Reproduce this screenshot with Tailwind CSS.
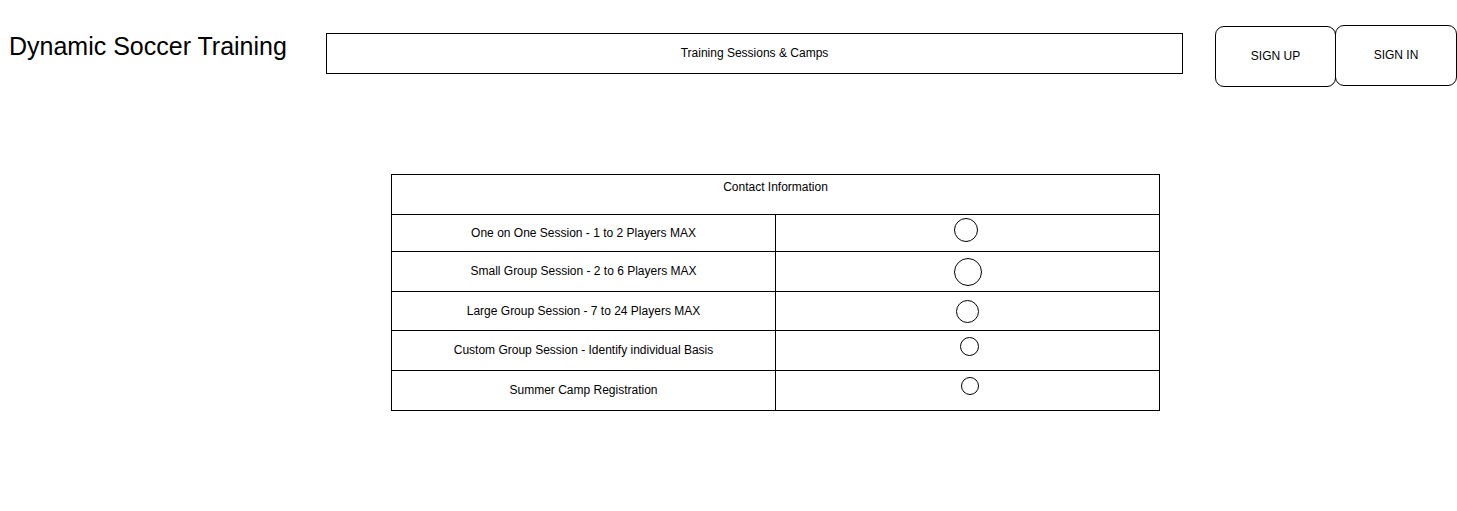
<!DOCTYPE html>
<html lang="en">
<head>
<meta charset="utf-8">
<meta name="viewport" content="width=device-width, initial-scale=1">
<title>Dynamic Soccer Training</title>
<script src="https://cdn.jsdelivr.net/npm/@tailwindcss/browser@4"></script>
</head>
<body class="bg-white font-['Liberation_Sans',Arial,sans-serif] text-xs text-black">
<header class="flex items-start pt-[25px] pl-[9px]">
  <h1 class="w-[317px] shrink-0 pt-[3px] text-[25px] leading-9 whitespace-nowrap">Dynamic Soccer Training</h1>
  <nav class="mt-2 min-w-0 flex-1">
    <a href="#sessions" class="flex h-[41px] items-center justify-center border border-black pb-0.5">Training Sessions &amp; Camps</a>
  </nav>
  <div class="ml-8 flex shrink-0 items-start">
    <button type="button" class="mt-px h-[61px] w-[121px] rounded-[9px] border border-black pb-0.5">SIGN UP</button>
    <button type="button" class="-ml-px h-[61px] w-[122px] rounded-[9px] border border-black pb-0.5">SIGN IN</button>
  </div>
</header>
<main id="sessions" class="pt-[87px] pr-[297px] pl-[391px]">
  <table class="w-full table-fixed border-separate border-spacing-0 border-r border-b border-black text-center">
    <thead>
      <tr><th colspan="2" class="h-10 border-t border-l border-black pt-1 align-top font-normal">Contact Information</th></tr>
    </thead>
    <tbody>
      <tr>
        <td class="h-[37px] border-t border-l border-black p-0"><label for="one">One on One Session - 1 to 2 Players MAX</label></td>
        <td class="border-t border-l border-black pt-[3px] pr-0.5 align-top"><div class="mx-auto flex w-[25px] justify-start"><input id="one" name="session" type="radio" class="size-6 shrink-0 appearance-none rounded-full border border-black checked:bg-black"></div></td>
      </tr>
      <tr>
        <td class="h-10 border-t border-l border-black p-0 pb-0.5"><label for="small">Small Group Session - 2 to 6 Players MAX</label></td>
        <td class="border-t border-l border-black pt-1.5 pr-0.5 align-top"><div class="mx-auto flex w-[25px] justify-start"><input id="small" name="session" type="radio" class="size-7 shrink-0 appearance-none rounded-full border border-black checked:bg-black"></div></td>
      </tr>
      <tr>
        <td class="h-[39px] border-t border-l border-black p-0"><label for="large">Large Group Session - 7 to 24 Players MAX</label></td>
        <td class="border-t border-l border-black pt-2 pr-0.5 align-top"><div class="mx-auto flex w-[25px] justify-end"><input id="large" name="session" type="radio" class="size-[23px] shrink-0 appearance-none rounded-full border border-black checked:bg-black"></div></td>
      </tr>
      <tr>
        <td class="h-10 border-t border-l border-black p-0 pb-0.5"><label for="custom">Custom Group Session - Identify individual Basis</label></td>
        <td class="border-t border-l border-black pt-1.5 pr-0.5 align-top"><div class="mx-auto flex w-[25px] justify-end"><input id="custom" name="session" type="radio" class="size-[19px] shrink-0 appearance-none rounded-full border border-black checked:bg-black"></div></td>
      </tr>
      <tr>
        <td class="h-10 border-t border-l border-black p-0 pb-0.5"><label for="camp">Summer Camp Registration</label></td>
        <td class="border-t border-l border-black pt-1.5 pr-0.5 align-top"><div class="mx-auto flex w-[25px] justify-end"><input id="camp" name="session" type="radio" class="size-[18px] shrink-0 appearance-none rounded-full border border-black checked:bg-black"></div></td>
      </tr>
    </tbody>
  </table>
</main>
</body>
</html>
